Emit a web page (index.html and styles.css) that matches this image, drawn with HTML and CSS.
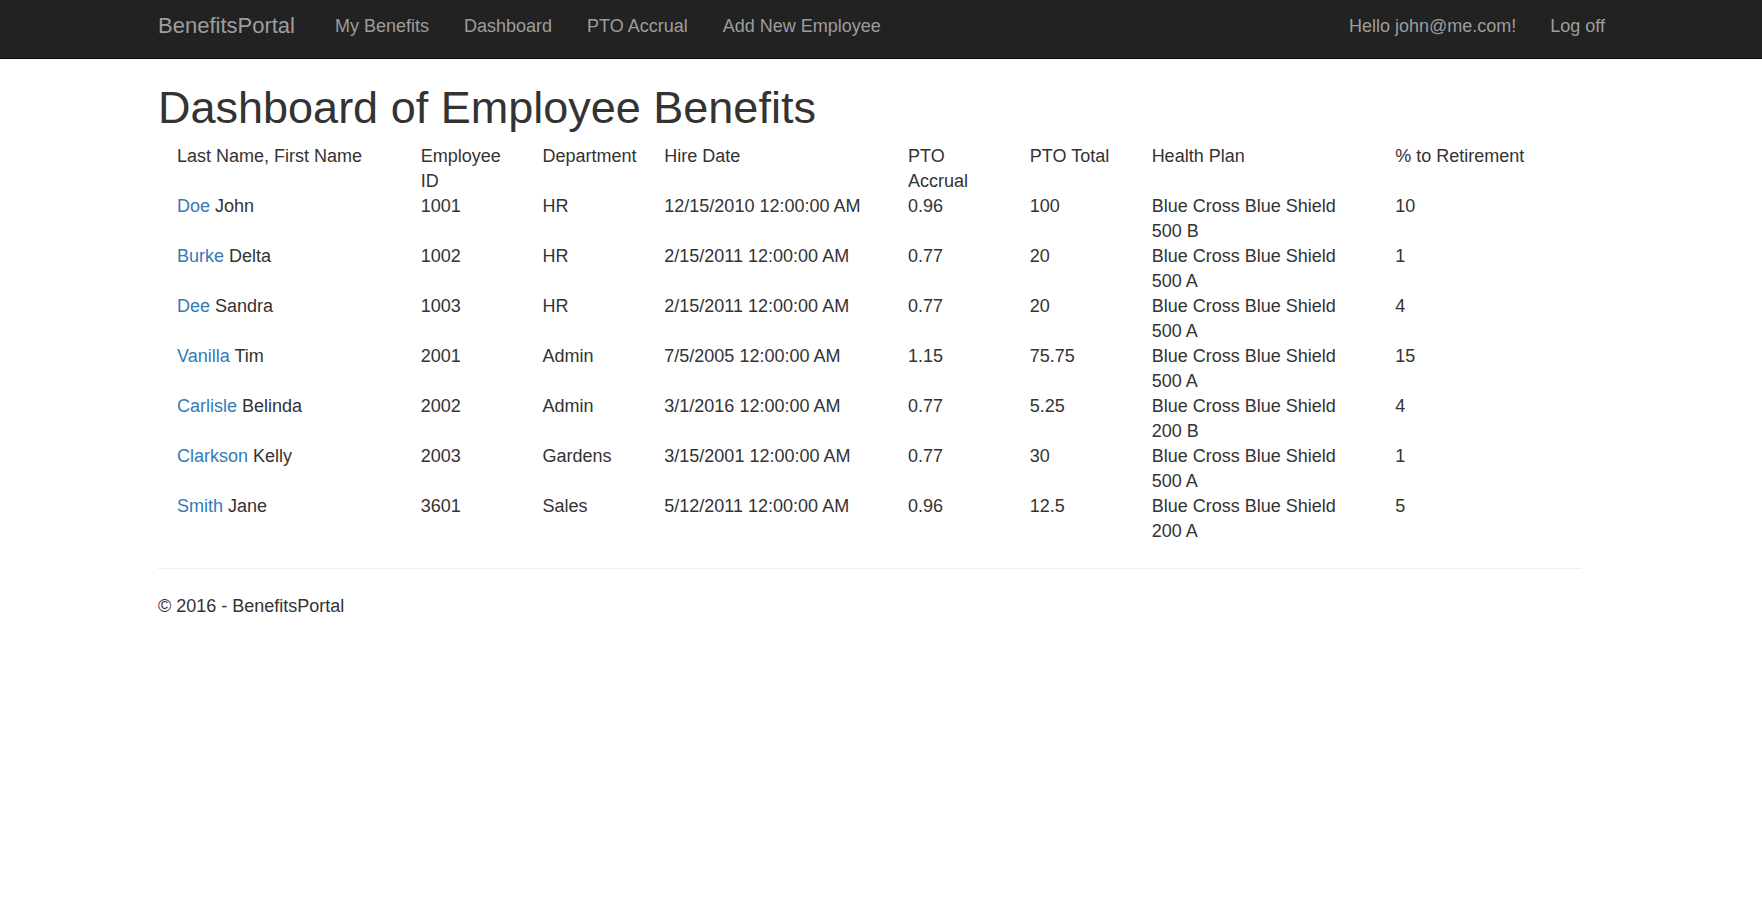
FILE: index.html
```html
<!DOCTYPE html>
<html lang="en">
<head>
<meta charset="utf-8">
<meta name="viewport" content="width=device-width, initial-scale=1">
<title>Dashboard - BenefitsPortal</title>
<link rel="stylesheet" href="styles.css">
</head>
<body>
<header class="navbar">
  <a class="brand" href="#">BenefitsPortal</a>
  <nav class="nav">
    <a class="nav-link" href="#">My Benefits</a>
    <a class="nav-link" href="#">Dashboard</a>
    <a class="nav-link" href="#">PTO Accrual</a>
    <a class="nav-link" href="#">Add New Employee</a>
  </nav>
  <div class="nav nav-right">
    <a class="nav-link" href="#">Hello john@me.com!</a>
    <a class="nav-link" href="#">Log off</a>
  </div>
</header>
<div class="page">
  <main>
    <h1 class="title">Dashboard of Employee Benefits</h1>
    <table class="benefits">
      <colgroup>
        <col class="wide"><col class="narrow"><col class="narrow"><col class="wide">
        <col class="narrow"><col class="narrow"><col class="wide"><col class="wide">
      </colgroup>
      <thead>
        <tr><th>Last Name, First Name</th><th>Employee ID</th><th>Department</th><th>Hire Date</th><th>PTO Accrual</th><th>PTO Total</th><th>Health Plan</th><th>% to Retirement</th></tr>
      </thead>
      <tbody>
        <tr><td><a href="#">Doe</a> John</td><td>1001</td><td>HR</td><td>12/15/2010 12:00:00 AM</td><td>0.96</td><td>100</td><td>Blue Cross Blue Shield 500 B</td><td>10</td></tr>
        <tr><td><a href="#">Burke</a> Delta</td><td>1002</td><td>HR</td><td>2/15/2011 12:00:00 AM</td><td>0.77</td><td>20</td><td>Blue Cross Blue Shield 500 A</td><td>1</td></tr>
        <tr><td><a href="#">Dee</a> Sandra</td><td>1003</td><td>HR</td><td>2/15/2011 12:00:00 AM</td><td>0.77</td><td>20</td><td>Blue Cross Blue Shield 500 A</td><td>4</td></tr>
        <tr><td><a href="#">Vanilla</a> Tim</td><td>2001</td><td>Admin</td><td>7/5/2005 12:00:00 AM</td><td>1.15</td><td>75.75</td><td>Blue Cross Blue Shield 500 A</td><td>15</td></tr>
        <tr><td><a href="#">Carlisle</a> Belinda</td><td>2002</td><td>Admin</td><td>3/1/2016 12:00:00 AM</td><td>0.77</td><td>5.25</td><td>Blue Cross Blue Shield 200 B</td><td>4</td></tr>
        <tr><td><a href="#">Clarkson</a> Kelly</td><td>2003</td><td>Gardens</td><td>3/15/2001 12:00:00 AM</td><td>0.77</td><td>30</td><td>Blue Cross Blue Shield 500 A</td><td>1</td></tr>
        <tr><td><a href="#">Smith</a> Jane</td><td>3601</td><td>Sales</td><td>5/12/2011 12:00:00 AM</td><td>0.96</td><td>12.5</td><td>Blue Cross Blue Shield 200 A</td><td>5</td></tr>
      </tbody>
    </table>
  </main>
  <footer class="footer">
    <p class="copyright">© 2016 - BenefitsPortal</p>
  </footer>
</div>
</body>
</html>
```
FILE: styles.css
```css
* {
  box-sizing: border-box;
}

body {
  margin: 0;
  background: #fff;
  color: #333;
  font-family: "Liberation Sans", Arial, sans-serif;
  font-size: 18px;
  line-height: 25px;
}

a {
  color: #337ab7;
  text-decoration: none;
}

.navbar {
  display: flex;
  align-items: flex-start;
  padding: 14px 157px 19px 158px;
  background: #222;
  border-bottom: 1px solid #080808;
}

.brand {
  margin-right: 40px;
  color: #9d9d9d;
  font-size: 22px;
  line-height: 24px;
}

.nav {
  display: flex;
  gap: 35px;
}

.nav-right {
  gap: 34px;
  margin-left: auto;
}

.nav-link {
  color: #9d9d9d;
  white-space: nowrap;
}

.page {
  padding: 24px 180px 24px 158px;
}

.title {
  margin: 0 0 11px;
  font-size: 45px;
  font-weight: 400;
  line-height: 50px;
}

/* The twelve-part grid runs one gutter pair past the text column. */
.benefits {
  width: calc(100% + 38px);
  table-layout: fixed;
  border-collapse: collapse;
}

.wide {
  width: 16.6667%;
}

.narrow {
  width: 8.3333%;
}

.benefits th,
.benefits td {
  padding: 0 19px;
  font-weight: 400;
  text-align: left;
  vertical-align: top;
}

.footer {
  margin-top: 24px;
  padding-top: 25px;
  border-top: 1px solid #eee;
}

.copyright {
  margin: 0;
}
```
